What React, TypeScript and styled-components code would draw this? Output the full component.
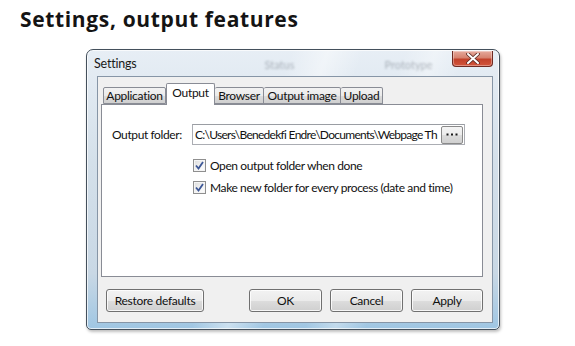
import React from 'react';
import styled, { createGlobalStyle } from 'styled-components';

const Global = createGlobalStyle`
  html, body { margin: 0; padding: 0; background: #fff; }
  body {
    width: 575px; height: 346px; overflow: hidden;
    font-family: Lato, "Liberation Sans", sans-serif;
  }
`;

const Page = styled.div`
  display: flex;
  flex-direction: column;
  padding-top: 5px;
`;

const Heading = styled.h1`
  margin: 0 0 0 20px;
  font-family: "Open Sans", "DejaVu Sans", sans-serif;
  font-weight: 700;
  font-size: 21px;
  line-height: 28px;
  letter-spacing: 0.65px;
  color: #141414;
`;

const Window = styled.div`
  margin: 16px 0 0 86px;
  width: 414px;
  height: 281px;
  box-sizing: border-box;
  border: 1px solid #44505c;
  border-radius: 7px 7px 5px 5px;
  background:
    linear-gradient(110deg, rgba(255,255,255,0) 40%, rgba(255,255,255,0.45) 47%, rgba(255,255,255,0) 54%),
    linear-gradient(110deg, rgba(255,255,255,0) 62%, rgba(255,255,255,0.35) 68%, rgba(255,255,255,0) 74%),
    linear-gradient(180deg, #e7eef5 0%, #d4e0ea 40%, #c9d8e5 80%, #9fc6e3 100%);
  box-shadow: inset 0 0 0 1px rgba(255,255,255,0.7), 1px 2px 3px rgba(0,0,0,0.25);
  display: flex;
  flex-direction: column;
  padding: 0 6px 6px 10px;
`;

const TitleBar = styled.div`
  height: 26px;
  display: flex;
  align-items: flex-start;
`;

const Title = styled.span`
  margin: 6px 0 0 -3px;
  font-size: 12.5px;
  line-height: 15px;
  letter-spacing: -0.2px;
  color: #1a1a1a;
`;

const GhostText = styled.span<{ $ml: number }>`
  margin: 8px 0 0 ${p => p.$ml}px;
  font-size: 11px;
  color: rgba(60, 70, 80, 0.35);
  filter: blur(1.3px);
`;

const CloseButton = styled.div`
  margin: 1px 0 0 auto;
  width: 41px;
  height: 16px;
  box-sizing: border-box;
  border: 1px solid #6e2a22;
  border-top: none;
  border-radius: 0 0 4px 4px;
  background: linear-gradient(180deg, #e6aa9d 0%, #d6826f 45%, #c2412a 55%, #d2553c 100%);
  box-shadow: inset 0 0 0 1px rgba(255,255,255,0.35);
  display: flex;
  align-items: center;
  justify-content: center;
`;

const Client = styled.div`
  flex: 1;
  border: 1px solid #8695a6;
  background: #f0f0f0;
  display: flex;
  flex-direction: column;
  padding: 6px 9px 10px 3px;
`;

const TabStrip = styled.div`
  height: 21px;
  display: flex;
  align-items: flex-end;
  padding-left: 2px;
  position: relative;
  z-index: 1;
`;

const Tab = styled.div<{ $active?: boolean; $w: number }>`
  width: ${p => p.$w}px;
  height: ${p => (p.$active ? 22 : 17)}px;
  box-sizing: border-box;
  margin-bottom: ${p => (p.$active ? -1 : 0)}px;
  border: 1px solid #898c95;
  border-bottom: ${p => (p.$active ? 'none' : '1px solid #898c95')};
  border-left: ${p => (p.$active ? '1px solid #898c95' : 'none')};
  border-radius: 2px 2px 0 0;
  background: ${p => (p.$active ? '#ffffff' : 'linear-gradient(180deg, #f2f2f2 0%, #ebebeb 50%, #dddddd 51%, #cfcfcf 100%)')};
  font-size: 12px;
  letter-spacing: -0.3px;
  line-height: ${p => (p.$active ? 17 : 16)}px;
  color: #111;
  text-align: center;
  white-space: nowrap;
  &:first-child { border-left: 1px solid #898c95; }
`;

const Panel = styled.div`
  height: 173px;
  box-sizing: border-box;
  border: 1px solid #898c95;
  background: #fff;
  display: flex;
  flex-direction: column;
  padding: 19px 17px 0 10px;
`;

const FolderRow = styled.div`
  display: flex;
  align-items: center;
`;

const Label = styled.span`
  width: 80px;
  font-size: 12px;
  letter-spacing: -0.4px;
  color: #111;
  white-space: nowrap;
`;

const Field = styled.div`
  width: 273px;
  height: 21px;
  box-sizing: border-box;
  border: 1px solid #abadb3;
  border-top-color: #9a9da3;
  background: #fff;
  display: flex;
  align-items: center;
  padding-left: 2px;
  padding-right: 1px;
`;

const FieldText = styled.span`
  flex: 1;
  overflow: hidden;
  white-space: nowrap;
  font-size: 12px;
  letter-spacing: -0.72px;
  color: #111;
`;

const Ellipsis = styled.div`
  width: 22px;
  height: 18px;
  box-sizing: border-box;
  border: 1px solid #8a8a8a;
  border-radius: 2px;
  background: linear-gradient(180deg, #f4f4f4 0%, #ececec 50%, #dcdcdc 51%, #d0d0d0 100%);
  display: flex;
  align-items: center;
  justify-content: center;
`;

const Checks = styled.div`
  display: flex;
  flex-direction: column;
  gap: 9px;
  margin: 14px 0 0 81px;
`;

const CheckRow = styled.div`
  display: flex;
  align-items: center;
  gap: 4px;
  height: 13px;
`;

const Box = styled.div`
  width: 13px;
  height: 13px;
  box-sizing: border-box;
  border: 1px solid #8f8f8f;
  background: linear-gradient(135deg, #dcdcdc 0%, #f4f4f4 60%, #ffffff 100%);
  box-shadow: inset 0 0 0 1px #f5f5f5;
  display: flex;
  align-items: center;
  justify-content: center;
`;

const CheckText = styled.span`
  font-size: 12px;
  letter-spacing: -0.4px;
  color: #111;
  line-height: 13px;
  white-space: nowrap;
`;

const ButtonRow = styled.div`
  margin-top: 12px;
  display: flex;
  padding-left: 5px;
  gap: 8px;
`;

const Button = styled.div<{ $w: number; $push?: boolean }>`
  width: ${p => p.$w}px;
  height: 23px;
  box-sizing: border-box;
  margin-left: ${p => (p.$push ? 'auto' : '0')};
  border: 1px solid #707070;
  border-radius: 3px;
  background: linear-gradient(180deg, #f2f2f2 0%, #ebebeb 50%, #dddddd 51%, #cfcfcf 100%);
  box-shadow: inset 0 0 0 1px rgba(255,255,255,0.8);
  font-size: 12px;
  letter-spacing: -0.3px;
  line-height: 21px;
  text-align: center;
  color: #111;
  white-space: nowrap;
`;

const Check = () => (
  <Box>
    <svg width="9" height="9" viewBox="0 0 9 9">
      <path d="M1 4.5 L3.5 7.5 L8 1" fill="none" stroke="#3d5796" strokeWidth="1.8" />
    </svg>
  </Box>
);

export default function App() {
  return (
    <>
      <Global />
      <Page>
        <Heading>Settings, output features</Heading>
        <Window>
          <TitleBar>
            <Title>Settings</Title>
            <GhostText $ml={128}>Status</GhostText>
            <GhostText $ml={90}>Prototype</GhostText>
            <CloseButton>
              <svg width="14" height="11" viewBox="0 0 14 11">
                <path d="M2 1 L12 10 M12 1 L2 10" stroke="#5a2a24" strokeWidth="3.6" strokeLinecap="round" />
                <path d="M2 1 L12 10 M12 1 L2 10" stroke="#ffffff" strokeWidth="2" strokeLinecap="round" />
              </svg>
            </CloseButton>
          </TitleBar>
          <Client>
            <TabStrip>
              <Tab $w={63}>Application</Tab>
              <Tab $w={49} $active>Output</Tab>
              <Tab $w={49}>Browser</Tab>
              <Tab $w={77}>Output image</Tab>
              <Tab $w={42}>Upload</Tab>
            </TabStrip>
            <Panel>
              <FolderRow>
                <Label>Output folder:</Label>
                <Field>
                  <FieldText>C:\Users\Benedekfi Endre\Documents\Webpage Th</FieldText>
                  <Ellipsis>
                    <svg width="12" height="3" viewBox="0 0 12 3">
                      <rect x="0.5" y="0.5" width="2" height="2" fill="#1a1a1a" />
                      <rect x="5" y="0.5" width="2" height="2" fill="#1a1a1a" />
                      <rect x="9.5" y="0.5" width="2" height="2" fill="#1a1a1a" />
                    </svg>
                  </Ellipsis>
                </Field>
              </FolderRow>
              <Checks>
                <CheckRow>
                  <Check />
                  <CheckText>Open output folder when done</CheckText>
                </CheckRow>
                <CheckRow>
                  <Check />
                  <CheckText>Make new folder for every process (date and time)</CheckText>
                </CheckRow>
              </Checks>
            </Panel>
            <ButtonRow>
              <Button $w={98}>Restore defaults</Button>
              <Button $w={73} $push>OK</Button>
              <Button $w={73}>Cancel</Button>
              <Button $w={72}>Apply</Button>
            </ButtonRow>
          </Client>
        </Window>
      </Page>
    </>
  );
}
